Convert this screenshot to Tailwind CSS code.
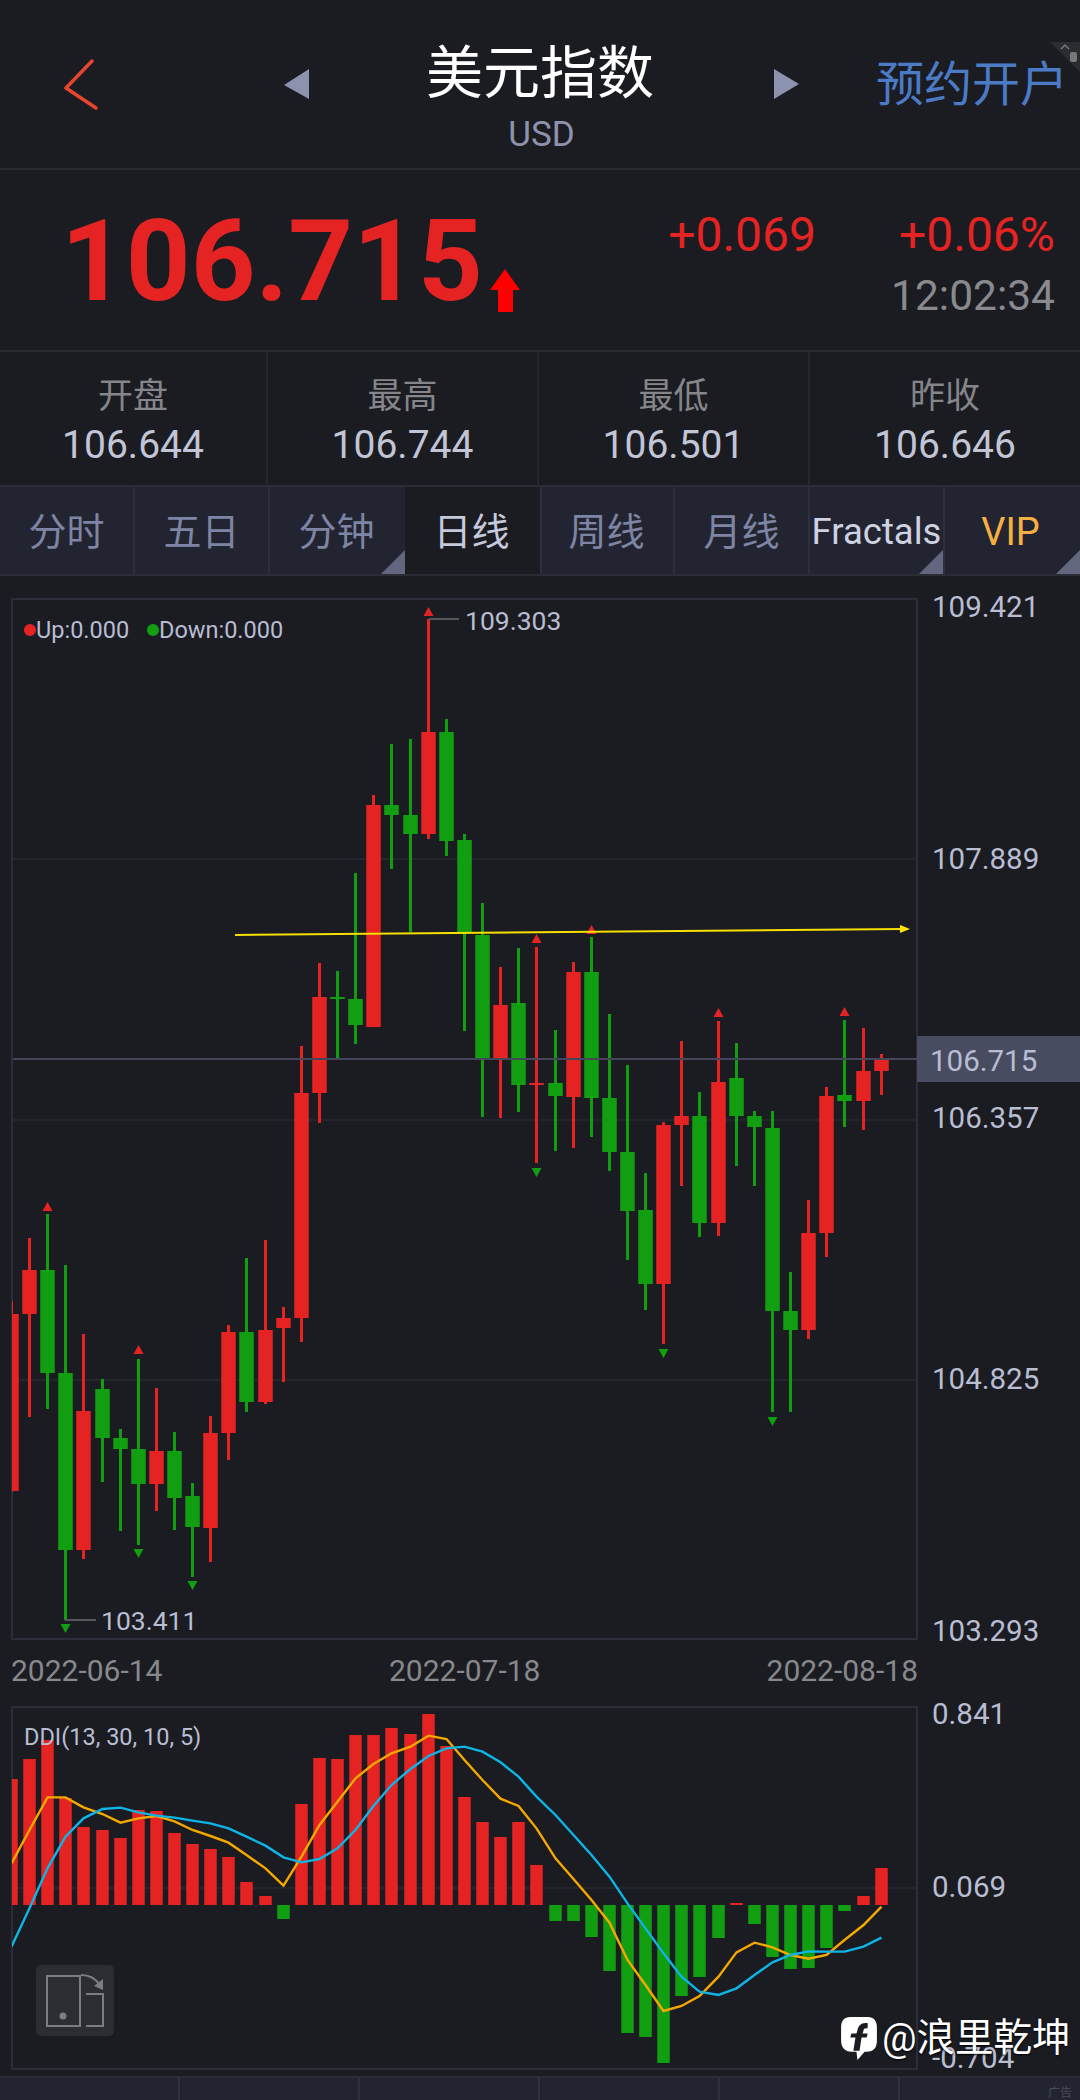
<!DOCTYPE html>
<html lang="zh">
<head>
    <meta charset="UTF-8">
    <title>美元指数</title>
    <script src="https://cdn.jsdelivr.net/npm/@tailwindcss/browser@4"></script>
</head>
<body class="relative w-[1080px] h-[2100px] overflow-hidden bg-[#1a1c22] font-['Roboto','Noto_Sans_CJK_SC',sans-serif]">

    <!-- Header -->
    <header class="relative flex h-[170px] border-b-2 border-[#2b2c33]">
        <svg class="ml-[63px] mt-[58px] w-[36px] h-[52px]" viewBox="0 0 36 52" fill="none" stroke="#e8452f" stroke-width="3.5" stroke-linecap="round" stroke-linejoin="round"><path d="M29 3 3 30l30 20"/></svg>
        <svg class="ml-[185px] mt-[69px] w-[25px] h-[30px]" viewBox="0 0 25 30"><path d="M25 0V30L0 16Z" fill="#8d93ae"/></svg>
        <div class="w-[465px] text-center">
            <h1 class="mt-[43px] pr-[3px] h-[66px] text-[57px] leading-[62px] font-normal text-white">美元指数</h1>
            <div class="mt-[7px] text-[35px] leading-[38px] text-[#8e93ad]">USD</div>
        </div>
        <svg class="mt-[69px] w-[25px] h-[30px]" viewBox="0 0 25 30"><path d="M0 0V30L25 15Z" fill="#8d93ae"/></svg>
        <a class="ml-[77px] mt-[55px] text-[48px] leading-[60px] text-[#4c7bc6] whitespace-nowrap">预约开户</a>
        <svg class="absolute right-0 top-[42px] w-[30px] h-[30px]" viewBox="0 0 30 30"><path d="M0 0H30V30Z" fill="#2b2c30"/><path d="M11 7l4-4 4 4" fill="none" stroke="#77787c" stroke-width="1.5"/><rect x="20" y="10" width="7" height="10" rx="2" fill="#77787c"/></svg>
    </header>

    <!-- Last price -->
    <section class="flex h-[182px] border-b-2 border-[#2b2c33]">
        <div class="ml-[61px] mt-[35px] text-[113px] leading-none font-bold text-[#e52323]">106.715</div>
        <svg class="ml-[7px] mt-[99px] w-[30px] h-[44px]" viewBox="0 0 30 44"><path d="M15 0 30 21H23V43H8V21H0Z" fill="#ff0000"/></svg>
        <div class="ml-auto mr-[25px] mt-[41px]">
            <div class="flex gap-[83px] text-[48px] leading-[48px] text-[#e52323]">
                <span>+0.069</span>
                <span>+0.06%</span>
            </div>
            <div class="mt-[15px] text-right text-[42.5px] leading-[43px] text-[#8a8a8e]">12:02:34</div>
        </div>
    </section>

    <!-- Open / high / low / close -->
    <section class="grid grid-cols-[268px_271px_271px_270px] h-[133px] text-center">
        <div class="border-r-2 border-[#26272e]">
            <div class="mt-[21px] text-[35px] leading-[48px] text-[#85858a]">开盘</div>
            <div class="text-[39px] leading-[48px] text-[#c2c5d6]">106.644</div>
        </div>
        <div class="border-r-2 border-[#26272e]">
            <div class="mt-[21px] text-[35px] leading-[48px] text-[#85858a]">最高</div>
            <div class="text-[39px] leading-[48px] text-[#c2c5d6]">106.744</div>
        </div>
        <div class="border-r-2 border-[#26272e]">
            <div class="mt-[21px] text-[35px] leading-[48px] text-[#85858a]">最低</div>
            <div class="text-[39px] leading-[48px] text-[#c2c5d6]">106.501</div>
        </div>
        <div>
            <div class="mt-[21px] text-[35px] leading-[48px] text-[#85858a]">昨收</div>
            <div class="text-[39px] leading-[48px] text-[#c2c5d6]">106.646</div>
        </div>
    </section>

    <!-- Period tabs -->
    <nav class="grid grid-cols-8 h-[91px] border-y-2 border-[#2b2c36] text-[38px] text-[#7e84a3]">
        <div class="flex items-center justify-center pt-[3px] bg-[#222431] border-r-2 border-[#2d2f3c]">分时</div>
        <div class="flex items-center justify-center pt-[3px] bg-[#222431] border-r-2 border-[#2d2f3c]">五日</div>
        <div class="relative flex items-center justify-center pt-[3px] pr-[2px] bg-[#222431]">分钟
            <svg class="absolute right-0 bottom-0 w-[24px] h-[24px]" viewBox="0 0 24 24"><path d="M24 0V24H0Z" fill="#62667e"/></svg>
        </div>
        <div class="flex items-center justify-center pt-[3px] pr-[2px] text-[#c5c9dc]">日线</div>
        <div class="flex items-center justify-center pt-[3px] pr-[2px] bg-[#222431] border-l-2 border-r-2 border-[#2d2f3c]">周线</div>
        <div class="flex items-center justify-center pt-[3px] bg-[#222431] border-r-2 border-[#2d2f3c]">月线</div>
        <div class="relative flex items-center justify-center pt-[3px] bg-[#222431] border-r-2 border-[#2d2f3c] text-[36.5px] text-[#cfd2e0] whitespace-nowrap">Fractals
            <svg class="absolute right-0 bottom-0 w-[24px] h-[24px]" viewBox="0 0 24 24"><path d="M24 0V24H0Z" fill="#62667e"/></svg>
        </div>
        <div class="relative flex items-center justify-center pt-[3px] pr-[4px] bg-[#222431] text-[38px] text-[#f5b041]">VIP
            <svg class="absolute right-0 bottom-0 w-[24px] h-[24px]" viewBox="0 0 24 24"><path d="M24 0V24H0Z" fill="#62667e"/></svg>
        </div>
    </nav>

    <!-- Charts: the svg uses page coordinates, it starts at y=576 -->
    <svg id="chart" class="block w-[1080px] h-[1500px]" viewBox="0 576 1080 1500" font-size="29.5">
        <defs>
            <clipPath id="frameClip"><rect x="12" y="576" width="905" height="1500"/></clipPath>
        </defs>

        <rect x="12" y="599" width="905" height="1040" fill="none" stroke="#2c2d3a" stroke-width="2"/>
        <path d="M13 859H916M13 1120H916M13 1380H916" stroke="#25262d" stroke-width="2"/>
        <g id="candles" clip-path="url(#frameClip)"></g>
        <path d="M13 1059H917" stroke="#44465a" stroke-width="2"/>
        <path d="M429 619H459M65 1620H96" stroke="#55565c" stroke-width="2"/>
        <path d="M235 935 902 929" stroke="#f5e000" stroke-width="2"/>
        <path d="M900 925 910 929 900 933Z" fill="#ffe600"/>

        <g fill="#b9bdd2">
            <circle cx="30" cy="630" r="6" fill="#e52323"/>
            <text x="36" y="638" font-size="23.5">Up:0.000</text>
            <circle cx="153" cy="630" r="6" fill="#119e11"/>
            <text x="159" y="638" font-size="23.5">Down:0.000</text>
            <text x="465" y="630" font-size="26.5">109.303</text>
            <text x="101" y="1630" font-size="26.5">103.411</text>

            <rect x="917" y="1036" width="163" height="46" fill="#484c60"/>
            <text x="932" y="617">109.421</text>
            <text x="932" y="869">107.889</text>
            <text x="930" y="1071">106.715</text>
            <text x="932" y="1128">106.357</text>
            <text x="932" y="1389">104.825</text>
            <text x="932" y="1641">103.293</text>
            <text x="932" y="1724">0.841</text>
            <text x="932" y="1897">0.069</text>
            <text x="932" y="2068">-0.704</text>
        </g>

        <g fill="#88888c" font-size="30">
            <text x="11" y="1681">2022-06-14</text>
            <text x="389" y="1681">2022-07-18</text>
            <text x="918" y="1681" text-anchor="end">2022-08-18</text>
        </g>

        <rect x="12" y="1707" width="905" height="362" fill="none" stroke="#2c2d3a" stroke-width="2"/>
        <path d="M13 1888H916" stroke="#25262d" stroke-width="2"/>
        <g id="bars" clip-path="url(#frameClip)"></g>
        <text x="24" y="1745" font-size="23.5" fill="#b9bdd2">DDI(13, 30, 10, 5)</text>

        <!-- rotate screen button -->
        <rect x="36" y="1965" width="78" height="71" rx="5" fill="#2c2d33"/>
        <g fill="none" stroke="#7c7c82" stroke-width="2">
            <rect x="47" y="1976" width="33" height="50"/>
            <path d="M86 1994H103V2026H86"/>
            <path d="M81 1975C90 1975 96 1979 100 1985"/>
        </g>
        <circle cx="63" cy="2016" r="3.5" fill="#7c7c82"/>
        <path d="M103 1990 94 1986 103 1979Z" fill="#7c7c82"/>
    </svg>

    <!-- Bottom strip -->
    <footer class="relative grid grid-cols-6 h-[24px] border-t-2 border-[#2b2d38] bg-[#222431]">
        <div class="border-r-2 border-[#2f313d]"></div>
        <div class="border-r-2 border-[#2f313d]"></div>
        <div class="border-r-2 border-[#2f313d]"></div>
        <div class="border-r-2 border-[#2f313d]"></div>
        <div class="border-r-2 border-[#2f313d]"></div>
        <div class="pl-[148px] pt-[8px] text-[12px] leading-[14px] text-[#4a4c5a]">广告</div>
    </footer>

    <!-- Watermark -->
    <div class="absolute left-[840px] top-[2016px] flex items-center gap-[4px] text-[38.5px] leading-[44px] text-white [text-shadow:0_1px_2px_#000]">
        <svg class="w-[38px] h-[44px]" viewBox="0 0 37 43"><path d="M10 1H27C33 1 36 5 36 11V24C36 31 33 35 26 35H24L17 43 16 35H11C5 35 1 31 1 24V11C1 5 4 1 10 1Z" fill="#fff"/><path d="M27 7C21 6 18 9 17 14L16 17H11L10 21H15L13 34H19L21 21H26L27 17H22L23 14C23 12 25 12 27 12Z" fill="#1a1c22"/></svg>
        <span>@浪里乾坤</span>
    </div>

    <script>
        const RED = "#e52323";
        const GREEN = "#119e11";
        const centerX = (i) => Math.round(11.9 + 18.12 * i) - 0.5;

        // color, wick top, body top, body bottom, wick bottom
        const candles = [
            ["r",1301,1314,1491,1492],["r",1238,1270,1314,1417],["g",1214,1270,1373,1409],["g",1265,1373,1550,1620],
            ["r",1334,1411,1550,1559],["g",1379,1389,1438,1482],["g",1429,1438,1449,1531],["g",1359,1449,1484,1545],
            ["r",1388,1451,1484,1511],["g",1432,1451,1498,1530],["g",1483,1496,1527,1577],["r",1416,1433,1528,1562],
            ["r",1325,1332,1433,1460],["g",1258,1332,1402,1412],["r",1240,1330,1402,1404],["r",1307,1318,1328,1382],
            ["r",1046,1093,1318,1342],["r",963,997,1093,1123],["g",971,997,999,1058],["g",873,999,1025,1044],
            ["r",795,805,1027,1027],["g",744,805,815,869],["g",739,815,834,932],["r",619,732,834,839],
            ["g",719,732,841,856],["g",834,840,933,1031],["g",903,935,1060,1117],["r",967,1005,1060,1118],
            ["g",948,1003,1085,1112],["r",947,1083,1085,1163],["g",1030,1083,1096,1151],["r",962,972,1097,1148],
            ["g",937,972,1098,1137],["g",1014,1098,1152,1171],["g",1065,1152,1211,1260],["g",1173,1210,1284,1310],
            ["r",1122,1125,1284,1344],["r",1041,1116,1125,1186],["g",1092,1116,1223,1237],["r",1021,1082,1223,1236],
            ["g",1043,1078,1116,1166],["g",1111,1116,1127,1186],["g",1111,1128,1311,1412],["g",1272,1311,1330,1412],
            ["r",1200,1233,1330,1339],["r",1087,1096,1233,1257],["g",1020,1095,1101,1127],["r",1028,1071,1101,1130],
            ["r",1054,1060,1071,1095],
        ];
        // candle index, tip y of the small high / low markers
        const highMarks = [[2,1202],[7,1345],[23,607],[29,934],[32,925],[39,1008],[46,1007]];
        const lowMarks = [[3,1633],[7,1558],[10,1590],[29,1177],[36,1358],[42,1426]];

        // top of each DDI bar, the base is at y=1905
        const barTops = [1779,1759,1740,1798,1827,1830,1838,1810,1811,1833,1844,1849,1857,1882,1896,1919,1804,1758,1759,1735,1735,1728,1734,1714,1746,1797,1822,1837,1822,1865,1921,1921,1937,1971,2033,2037,2063,1996,1977,1938,1903,1924,1957,1969,1968,1948,1911,1896,1868];
        const orange = [550,450,352,352,382,402,428,415,408,424,450,468,488,525,565,617,530,435,365,295,252,220,200,167,177,240,300,356,378,445,535,597,660,728,840,915,993,978,948,890,817,788,802,825,836,825,780,735,680];
        const blue = [800,685,565,470,415,387,383,397,407,413,422,430,445,470,497,532,547,537,505,450,378,315,267,228,205,200,215,247,290,350,405,465,525,590,670,745,820,890,935,945,925,885,847,825,814,815,815,800,773];

        let candleSvg = "";
        candles.forEach(([c, wickTop, bodyTop, bodyBot, wickBot], i) => {
            const x = centerX(i);
            const color = c === "r" ? RED : GREEN;
            candleSvg += `<rect x="${x - 1.5}" y="${wickTop}" width="3" height="${wickBot - wickTop}" fill="${color}"/>`;
            candleSvg += `<rect x="${x - 7.25}" y="${bodyTop}" width="14.5" height="${bodyBot - bodyTop}" fill="${color}"/>`;
        });
        highMarks.forEach(([i, y]) => {
            const x = centerX(i);
            candleSvg += `<path d="M${x} ${y}l5 9h-10z" fill="${RED}"/>`;
        });
        lowMarks.forEach(([i, y]) => {
            const x = centerX(i);
            candleSvg += `<path d="M${x} ${y}l5-9h-10z" fill="${GREEN}"/>`;
        });
        document.getElementById("candles").innerHTML = candleSvg;

        let barSvg = "";
        barTops.forEach((top, i) => {
            const x = centerX(i) - 6.25;
            const color = top > 1905 || (i > 29 && i < 47 && i !== 40) ? GREEN : RED;
            barSvg += `<rect x="${x}" y="${Math.min(top, 1905)}" width="12.5" height="${Math.abs(top - 1905)}" fill="${color}"/>`;
        });
        const linePoints = (vals) => vals.map((z, i) => `${centerX(i)},${1680 + z / 3}`).join(" ");
        barSvg += `<polyline points="${linePoints(orange)}" fill="none" stroke="#f5a800" stroke-width="2.4"/>`;
        barSvg += `<polyline points="${linePoints(blue)}" fill="none" stroke="#0fb4e6" stroke-width="2.4"/>`;
        document.getElementById("bars").innerHTML = barSvg;
    </script>
</body>
</html>
